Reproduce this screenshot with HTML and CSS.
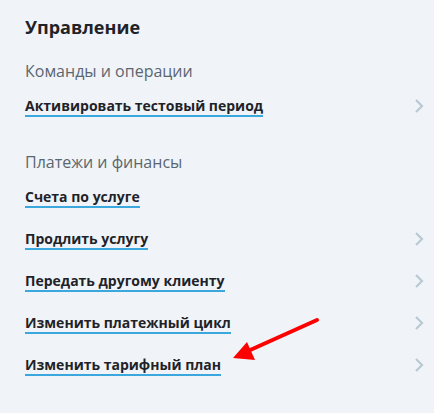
FILE: index.html
```html
<!DOCTYPE html>
<html lang="ru">
<head>
<meta charset="utf-8">
<link rel="stylesheet" href="styles.css">
</head>
<body>
<div class="panel">
  <h2 class="title">Управление</h2>
  <section class="group">
    <h3 class="group-title">Команды и операции</h3>
    <ul class="list">
      <li class="item"><a class="link" href="#">Активировать тестовый период</a><svg class="chev" width="10" height="16" viewBox="0 0 10 16"><polyline points="2,2 8,8 2,14" fill="none" stroke="#b9c9d3" stroke-width="2.2"/></svg></li>
    </ul>
  </section>
  <section class="group">
    <h3 class="group-title">Платежи и финансы</h3>
    <ul class="list">
      <li class="item"><a class="link" href="#">Счета по услуге</a></li>
      <li class="item"><a class="link" href="#">Продлить услугу</a><svg class="chev" width="10" height="16" viewBox="0 0 10 16"><polyline points="2,2 8,8 2,14" fill="none" stroke="#b9c9d3" stroke-width="2.2"/></svg></li>
      <li class="item"><a class="link" href="#">Передать другому клиенту</a><svg class="chev" width="10" height="16" viewBox="0 0 10 16"><polyline points="2,2 8,8 2,14" fill="none" stroke="#b9c9d3" stroke-width="2.2"/></svg></li>
      <li class="item"><a class="link" href="#">Изменить платежный цикл</a><svg class="chev" width="10" height="16" viewBox="0 0 10 16"><polyline points="2,2 8,8 2,14" fill="none" stroke="#b9c9d3" stroke-width="2.2"/></svg></li>
      <li class="item"><a class="link" href="#">Изменить тарифный план</a><svg class="chev" width="10" height="16" viewBox="0 0 10 16"><polyline points="2,2 8,8 2,14" fill="none" stroke="#b9c9d3" stroke-width="2.2"/></svg></li>
    </ul>
  </section>
  <svg class="arrow" width="434" height="413" viewBox="0 0 434 413">
    <line x1="317" y1="320" x2="248" y2="351" stroke="#ff0000" stroke-width="4" stroke-linecap="round"/>
    <polygon points="233,358 247,342 255,360" fill="#ff0000"/>
  </svg>
</div>
</body>
</html>
```
FILE: styles.css
```css
html, body {
  margin: 0;
  padding: 0;
  background: #f0f4f8;
}
body {
  font-family: "Open Sans", "Noto Sans", sans-serif;
  color: #1f2329;
}
.panel {
  position: relative;
  width: 434px;
  height: 413px;
  box-sizing: border-box;
  padding: 15px 10px 0 25px;
  overflow: hidden;
}
.title {
  margin: 0;
  font-size: 18px;
  font-weight: 700;
  line-height: 24px;
  color: #1f2329;
}
.group-title {
  margin: 0;
  font-size: 16px;
  font-weight: 400;
  line-height: 22px;
  color: #5b6670;
}
.group:first-of-type .group-title {
  margin-top: 21px;
}
.group + .group .group-title {
  margin-top: 24px;
}
.list {
  list-style: none;
  margin: 3px 0 0;
  padding: 0;
}
.item {
  display: flex;
  align-items: center;
  justify-content: space-between;
  height: 42px;
}
.link {
  font-size: 14px;
  font-weight: 700;
  line-height: 19px;
  color: #1f2329;
  text-decoration: none;
  border-bottom: 2px solid #3aa7dd;
}
.chev {
  display: block;
  flex: none;
}
.arrow {
  position: absolute;
  left: 0;
  top: 0;
  pointer-events: none;
}
```
